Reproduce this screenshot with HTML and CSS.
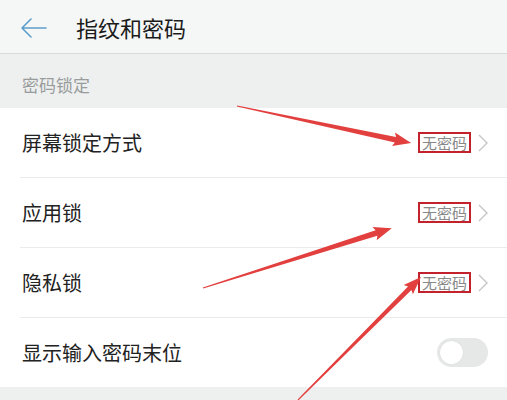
FILE: index.html
```html
<!DOCTYPE html>
<html lang="zh-CN">
<head>
    <meta charset="UTF-8">
    <meta name="viewport" content="width=device-width, initial-scale=1.0">
    <title>指纹和密码</title>
    <link rel="stylesheet" href="styles.css">
</head>
<body>
    <div id="screen">
        <div class="header">
            <svg class="back" width="26" height="20" viewBox="0 0 26 20">
                <path d="M1 10 H25 M10 1 L1 10 L10 19" fill="none" stroke="#5d9fca" stroke-width="1.6" stroke-linecap="round" stroke-linejoin="round"/>
            </svg>
            <h1>指纹和密码</h1>
        </div>
        <div class="section-title">密码锁定</div>
        <div class="list">
            <div class="row">
                <span class="label">屏幕锁定方式</span>
                <span class="value">无密码</span>
                <svg class="chevron" width="10" height="18" viewBox="0 0 10 18"><path d="M1 1 L9 9 L1 17" fill="none" stroke="#c6c6c6" stroke-width="1.4"/></svg>
            </div>
            <div class="row">
                <span class="label">应用锁</span>
                <span class="value">无密码</span>
                <svg class="chevron" width="10" height="18" viewBox="0 0 10 18"><path d="M1 1 L9 9 L1 17" fill="none" stroke="#c6c6c6" stroke-width="1.4"/></svg>
            </div>
            <div class="row">
                <span class="label">隐私锁</span>
                <span class="value">无密码</span>
                <svg class="chevron" width="10" height="18" viewBox="0 0 10 18"><path d="M1 1 L9 9 L1 17" fill="none" stroke="#c6c6c6" stroke-width="1.4"/></svg>
            </div>
            <div class="row">
                <span class="label">显示输入密码末位</span>
                <span class="toggle"><span class="knob"></span></span>
            </div>
        </div>
        <div class="footer"></div>

        <!-- annotation arrows drawn over the screenshot -->
        <svg class="marks" width="507" height="400" viewBox="0 0 507 400">
            <g fill="#e2403f">
                <polygon transform="translate(237 106) rotate(12)" points="0,-0.6 162,-2.8 160,-7 178,0 160,7 162,2.8 0,0.6"/>
                <polygon transform="translate(203 288) rotate(-17.6)" points="0,-0.6 182,-2.8 180,-7 198,0 180,7 182,2.8 0,0.6"/>
                <polygon transform="translate(298 400) rotate(-45)" points="0,-0.6 158,-2.4 156,-6.5 174,0 156,6.5 158,2.4 0,0.6"/>
            </g>
        </svg>
    </div>
</body>
</html>
```

FILE: styles.css
```css
body {
    margin: 0;
    font-family: "Noto Sans CJK SC", "Noto Sans", sans-serif;
    background: #eef0f0;
}
#screen {
    position: relative;
    width: 507px;
    height: 400px;
    overflow: hidden;
    background: #eef0f0;
}
.header {
    display: flex;
    align-items: center;
    height: 54px;
    padding-left: 21px;
    background: #f5f7f7;
    border-bottom: 1px solid #d6dada;
    box-sizing: border-box;
}
.back {
    margin-top: 2px;
}
.header h1 {
    margin: 0 0 0 29px;
    font-size: 22px;
    font-weight: normal;
    color: #1b1b1b;
    line-height: 1;
}
.section-title {
    height: 54px;
    display: flex;
    align-items: center;
    padding-left: 22px;
    padding-top: 6px;
    box-sizing: border-box;
    font-size: 17px;
    color: #999c9c;
}
.list {
    background: #fff;
}
.row {
    display: flex;
    align-items: center;
    height: 69px;
    margin-left: 20px;
    padding-left: 2px;
    padding-right: 19px;
    border-bottom: 1px solid #eaecec;
}
.row:last-child {
    border-bottom: none;
}
.label {
    flex: 1;
    font-size: 20px;
    color: #222;
}
.value {
    font-size: 15px;
    line-height: 17px;
    color: #888;
    padding: 0 2px;
    border: 2.5px solid #c3222c;
    margin-right: 7px;
}
.chevron {
    display: block;
}
.toggle {
    position: relative;
    width: 51px;
    height: 29px;
    border-radius: 15px;
    background: #e6e7e7;
}
.knob {
    position: absolute;
    left: 3px;
    top: 3px;
    width: 23px;
    height: 23px;
    border-radius: 50%;
    background: #fff;
    box-shadow: 0 0 1px rgba(0, 0, 0, 0.15);
}
.footer {
    height: 16px;
}
.marks {
    position: absolute;
    left: 0;
    top: 0;
    pointer-events: none;
}
```
